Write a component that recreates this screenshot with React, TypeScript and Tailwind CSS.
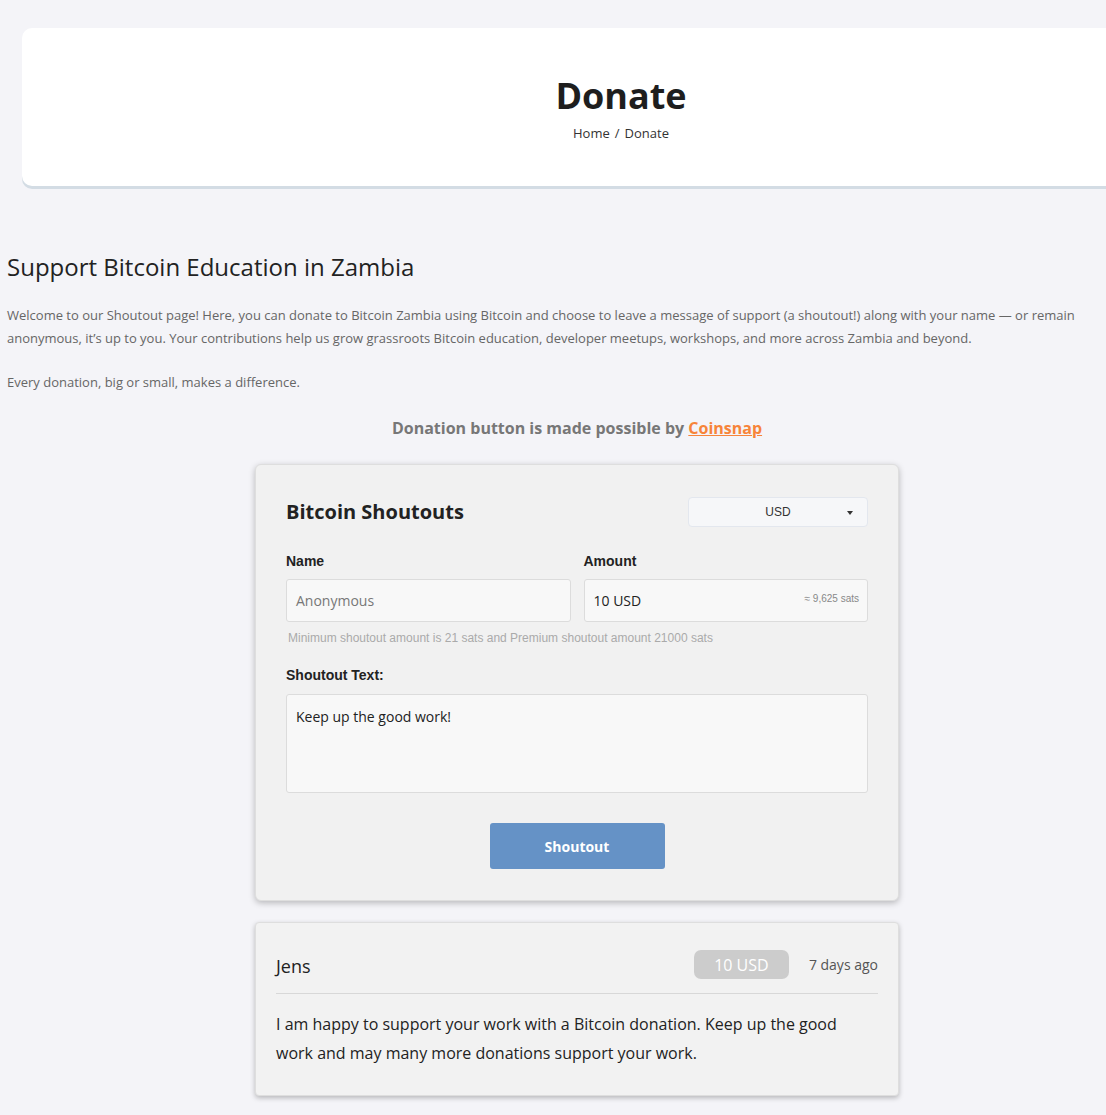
import React from "react";

const open = { fontFamily: '"Open Sans", "Noto Sans", sans-serif' };
const arial = { fontFamily: '"Liberation Sans", Arial, sans-serif' };

export default function App() {
  return (
    <div className="min-h-[1115px] w-full overflow-hidden bg-[#f4f4f8]" style={open}>
      <div className="pt-[28px] pl-[22px]">
        <div className="w-[1198px] h-[158px] bg-white rounded-[10px] shadow-[0_3px_0_#d3dce4] flex flex-col items-center pt-[45px]">
          <h1 className="text-[36px] font-bold leading-[46px] text-[#1e1e1e]">Donate</h1>
          <div className="mt-[5px] text-[13px] text-[#333] leading-[18px] flex gap-[5px]">
            <span>Home</span><span>/</span><span>Donate</span>
          </div>
        </div>
      </div>

      <div className="px-[7px] pt-[66px]">
        <h2 className="text-[24px] leading-[30px] text-[#222] font-normal">Support Bitcoin Education in Zambia</h2>
        <p className="mt-[22px] text-[13px] leading-[23px] text-[#666] pr-[20px]">
          Welcome to our Shoutout page! Here, you can donate to Bitcoin Zambia using Bitcoin and choose to leave a message of support (a shoutout!) along with your name — or remain anonymous, it’s up to you. Your contributions help us grow grassroots Bitcoin education, developer meetups, workshops, and more across Zambia and beyond.
        </p>
        <p className="mt-[21px] text-[13px] leading-[23px] text-[#666]">Every donation, big or small, makes a difference.</p>
      </div>

      <div className="w-[644px] ml-[255px]">
        <p className="mt-[22px] text-center text-[16px] font-bold text-[#777] leading-[24px] whitespace-nowrap">
          Donation button is made possible by <span className="text-[#f7843a] underline">Coinsnap</span>
        </p>

        <div className="mt-[24px] bg-[#f1f1f1] border border-[#dedede] rounded-[6px] shadow-[0_2px_6px_rgba(0,0,0,0.25)] px-[30px] pt-[32px] pb-[31px]">
          <div className="flex items-center justify-between">
            <div className="text-[20px] font-bold text-[#222]">Bitcoin Shoutouts</div>
            <div className="w-[180px] h-[30px] rounded-[4px] bg-[#f6f7f9] border border-[#e3e7ee] relative flex items-center justify-center text-[12px] text-[#333]" style={arial}>
              USD
              <span className="absolute right-[14px] top-[13px] w-0 h-0 border-l-[3px] border-r-[3px] border-t-[4px] border-l-transparent border-r-transparent border-t-[#333]" />
            </div>
          </div>
          <div className="flex gap-[13px] mt-[26px]">
            <div className="flex-1">
              <div className="text-[14px] font-bold text-[#222] leading-[16px]" style={arial}>Name</div>
              <div className="mt-[10px] h-[43px] bg-[#f8f8f8] border border-[#dcdcdc] rounded-[3px] flex items-center px-[9px] text-[14px] text-[#777]">Anonymous</div>
            </div>
            <div className="flex-1">
              <div className="text-[14px] font-bold text-[#222] leading-[16px]" style={arial}>Amount</div>
              <div className="mt-[10px] h-[43px] bg-[#f8f8f8] border border-[#dcdcdc] rounded-[3px] flex items-center px-[9px] text-[14px] text-[#222] relative">
                10 USD
                <span className="absolute right-[8px] top-[11px] text-[10px] text-[#888]" style={arial}>≈ 9,625 sats</span>
              </div>
            </div>
          </div>
          <div className="mt-[9px] ml-[2px] text-[12px] text-[#aaa] leading-[14px]" style={arial}>Minimum shoutout amount is 21 sats and Premium shoutout amount 21000 sats</div>
          <div className="mt-[22px] text-[14px] font-bold text-[#222] leading-[16px]" style={arial}>Shoutout Text:</div>
          <div className="mt-[11px] h-[99px] bg-[#f8f8f8] border border-[#dcdcdc] rounded-[3px] px-[9px] pt-[11px] text-[14px] text-[#222]">Keep up the good work!</div>
          <div className="flex justify-center mt-[30px]">
            <div className="w-[175px] h-[46px] rounded-[3px] bg-[#6592c6] flex items-center justify-center text-white text-[14px] font-bold">Shoutout</div>
          </div>
        </div>

        <div className="mt-[21px] bg-[#f2f2f2] border border-[#dedede] rounded-[4px] shadow-[0_2px_5px_rgba(0,0,0,0.25)] px-[20px] pt-[26px] pb-[27px]">
          <div className="flex items-center justify-between pb-[13px] border-b border-[#d8d8d8]">
            <div className="text-[18px] text-[#222] pt-[4px]">Jens</div>
            <div className="flex items-center gap-[20px]">
              <div className="w-[95px] h-[29px] rounded-[7px] bg-[#cccccc] text-white text-[16px] flex items-center justify-center">10 USD</div>
              <div className="text-[14px] text-[#555]">7 days ago</div>
            </div>
          </div>
          <p className="mt-[16px] text-[16px] leading-[29px] text-[#222] pr-[20px]">
            I am happy to support your work with a Bitcoin donation. Keep up the good work and may many more donations support your work.
          </p>
        </div>
      </div>
    </div>
  );
}
